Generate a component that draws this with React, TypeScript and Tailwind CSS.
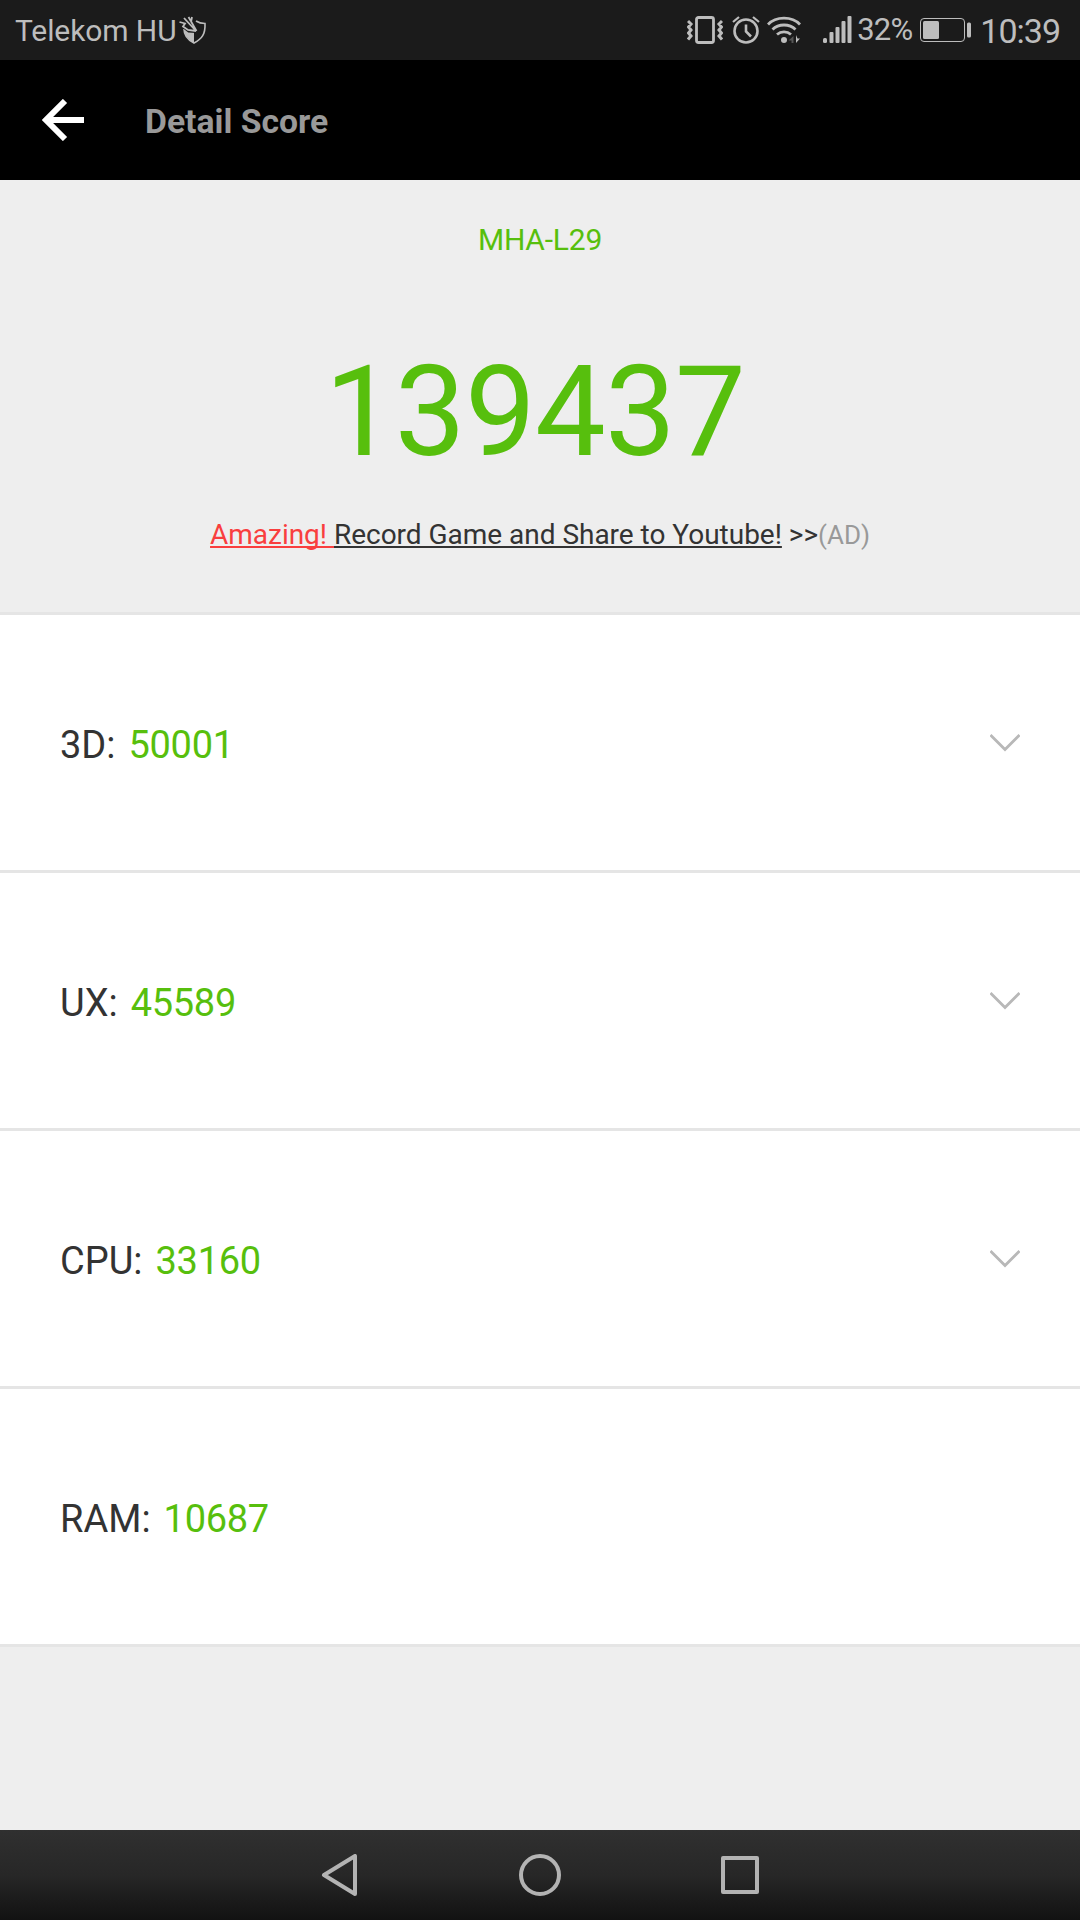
import type { ReactNode } from "react";

interface ScoreItem {
  label: string;
  score: number;
  expandable: boolean;
}

const scores: ScoreItem[] = [
  { label: "3D", score: 50001, expandable: true },
  { label: "UX", score: 45589, expandable: true },
  { label: "CPU", score: 33160, expandable: true },
  { label: "RAM", score: 10687, expandable: false },
];

function ShieldIcon() {
  return (
    <svg width="28" height="28" viewBox="0 0 28 28" fill="none" className="ml-[3px]">
      <path d="M5 13c0 6 3 10.500 10 14C23 23 26.500 18 26 7.500c-3 0-6-.5-9-2.500" stroke="#bdbdbd" strokeWidth="1.600" />
      <path d="M5 12l10 3v12C8 23 5 18 5 12z" fill="#bdbdbd" />
      <path d="M1 5.500l6 2-2 3 5 4 7 0.500M6 2l11 13M11 0.500L18 15" stroke="#1b1b1b" strokeWidth="4" />
      <path d="M0.500 6l5.500 1.500-2 3 5 3.500 8 1M5 2l12 13M9.500 1l8 14M13 1l-1 5" stroke="#bdbdbd" strokeWidth="1.800" />
    </svg>
  );
}

function VibrateIcon() {
  return (
    <svg width="36" height="28" viewBox="0 0 36 28" fill="none" stroke="#bdbdbd">
      <rect x="9.500" y="1.500" width="17" height="25" rx="2" strokeWidth="2.800" />
      <path d="M1 5l3 3-2.500 3 2.500 3-2.500 3 2.500 3L1 23.500M35 5l-3 3 2.500 3-2.500 3 2.500 3-2.500 3 3 3.500" strokeWidth="3" />
    </svg>
  );
}

function AlarmIcon() {
  return (
    <svg width="28" height="28" viewBox="0 0 28 28" fill="none" stroke="#bdbdbd" strokeWidth="2.600" className="ml-[9px]">
      <circle cx="14" cy="15" r="11.500" />
      <path d="M14 8.500v7l5 5" />
      <path d="M1 6l6-5M27 6l-6-5" strokeWidth="2.200" />
    </svg>
  );
}

function WifiIcon() {
  return (
    <svg width="34" height="28" viewBox="0 0 34 28" fill="none" stroke="#bdbdbd" strokeWidth="2.800" className="ml-[7px]">
      <path d="M1 8.500C9 0 25 0 33 8.500M5.500 13.500c6-6 17-6 23 0M10 18.500c4-3.600 10-3.600 14 0" />
      <circle cx="17" cy="24" r="3" fill="#bdbdbd" stroke="none" />
      <path d="M26.500 20v7h-2v-2.500H21.500z" fill="#555" stroke="none" />
      <path d="M29 19v8l4-4.500h-2.500z" fill="#bdbdbd" stroke="none" />
    </svg>
  );
}

function SignalIcon() {
  return (
    <svg width="29" height="28" viewBox="0 0 29 28" fill="#bdbdbd" className="ml-[22px]">
      <rect x="0" y="22" width="4" height="5" rx="1.500" />
      <rect x="6.500" y="16" width="4" height="11" rx="1" />
      <rect x="12.500" y="11" width="4" height="16" rx="1" />
      <rect x="18.500" y="5" width="4" height="22" rx="1" />
      <rect x="24.500" y="0" width="4" height="27" rx="1" />
    </svg>
  );
}

function BatteryIcon() {
  return (
    <svg width="51" height="24" viewBox="0 0 51 24" fill="none" className="ml-[8px]">
      <rect x="0.500" y="0.500" width="44" height="23" rx="3.500" stroke="#bdbdbd" />
      <rect x="3" y="3" width="16" height="18" rx="1.500" fill="#bdbdbd" />
      <rect x="47" y="4.500" width="4" height="15" rx="1.500" fill="#bdbdbd" />
    </svg>
  );
}

function StatusBar() {
  return (
    <div className="flex h-[60px] items-center justify-between bg-[#1b1b1b] pl-[15px] pr-[20px] text-[30px] text-[#bdbdbd]">
      <div className="flex items-center">
        <span className="tracking-[-0.1px]">Telekom HU</span>
        <ShieldIcon />
      </div>
      <div className="flex items-center">
        <VibrateIcon />
        <AlarmIcon />
        <WifiIcon />
        <SignalIcon />
        <span className="ml-[5px] text-[31px] leading-[44px] tracking-[-0.8px]">32%</span>
        <BatteryIcon />
        <span className="ml-[9px] pt-[2px] text-[34px] leading-[44px] tracking-[-1px]">10:39</span>
      </div>
    </div>
  );
}

function Header() {
  return (
    <header className="flex h-[120px] items-center bg-black pl-[42px]">
      <button type="button" aria-label="Back">
        <svg width="42" height="42" viewBox="0 0 42 42" fill="none" stroke="#fff" strokeWidth="6">
          <path d="M23 2L4 21l19 19M4 21h38" />
        </svg>
      </button>
      <h1 className="ml-[61px] pt-[4px] text-[33.7px] font-bold text-[#999]">Detail Score</h1>
    </header>
  );
}

function Summary() {
  return (
    <section className="flex h-[435px] flex-col items-center border-b-3 border-[#e5e5e5] pt-[40px]">
      <p className="text-[30px] leading-[40px] tracking-[-0.2px] text-[#57bf0d]">MHA-L29</p>
      <p className="mt-[77px] pr-[10px] text-[126px] leading-[150px] tracking-[-0.75px] text-[#57bf0d]">139437</p>
      <p className="mt-[28px] whitespace-nowrap text-[28px] leading-[40px] tracking-[-0.02px] text-[#333] underline-offset-2 [text-decoration-skip-ink:none]">
        <span className="text-[#f93e3e] underline decoration-2">Amazing! </span>
        <span className="underline decoration-2">Record Game and Share to Youtube!</span>
        {" >>"}
        <span className="text-[26px] text-[#999]">(AD)</span>
      </p>
    </section>
  );
}

function ScoreRow({ label, score, expandable }: ScoreItem) {
  return (
    <li className="flex h-[258px] items-center justify-between border-b-3 border-[#e5e5e5] bg-white px-[60px]">
      <div className="flex gap-[13px] pt-[5px] text-[38px] text-[#333]">
        <span>{label}:</span>
        <span className="tracking-[-0.3px] text-[#57bf0d]">{score}</span>
      </div>
      {expandable && (
        <svg width="30" height="18" viewBox="0 0 30 18" fill="none" stroke="#b8b8b8" strokeWidth="2.800">
          <path d="M0.500 1L15 15.500L29.500 1" />
        </svg>
      )}
    </li>
  );
}

function NavButton({ label, children }: { label: string; children: ReactNode }) {
  return (
    <button type="button" aria-label={label}>
      <svg width="42" height="42" viewBox="0 0 42 42" fill="none" stroke="#b3b3b3" strokeWidth="4" strokeLinejoin="round">
        {children}
      </svg>
    </button>
  );
}

function NavBar() {
  return (
    <nav className="flex h-[90px] items-center justify-center gap-[158px] bg-linear-to-b from-[#303030] via-[#272727] to-[#121212]">
      <NavButton label="Back">
        <path d="M36 2v38L5 21z" />
      </NavButton>
      <NavButton label="Home">
        <circle cx="21" cy="21" r="19" />
      </NavButton>
      <NavButton label="Recents">
        <rect x="4" y="4" width="34" height="34" />
      </NavButton>
    </nav>
  );
}

export default function App() {
  return (
    <div className="flex h-[1920px] w-[1080px] flex-col overflow-hidden bg-[#eee] font-['Roboto',sans-serif]">
      <StatusBar />
      <Header />
      <Summary />
      <ul className="flex-1">
        {scores.map((item) => (
          <ScoreRow key={item.label} {...item} />
        ))}
      </ul>
      <NavBar />
    </div>
  );
}
